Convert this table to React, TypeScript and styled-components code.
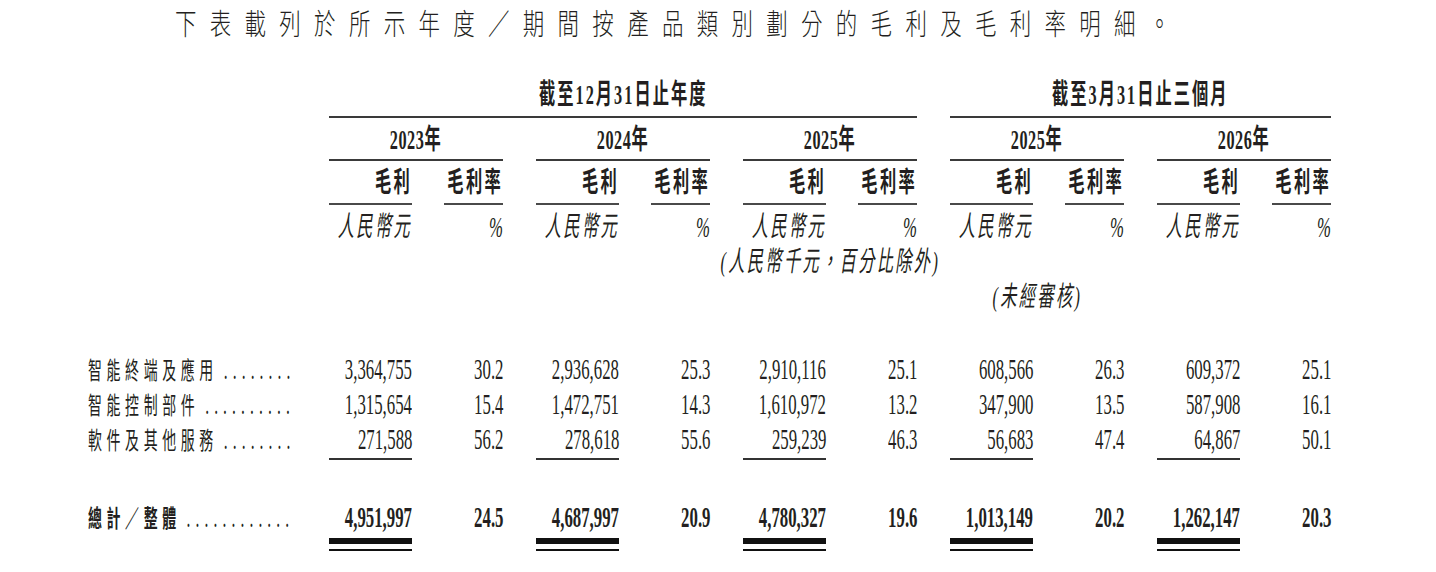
import React from 'react';
import styled, { createGlobalStyle } from 'styled-components';

// the source is set in condensed faces, so every text run is squeezed horizontally
const SQUEEZE = 0.58;
const NUM_SQUEEZE = 0.56;
const GROUP_W = 174;
const GROUP_GAP = 33;
const AMOUNT_W = 83;
const PCT_W = 59;

type Align = 'left' | 'center' | 'right';
const justify: Record<Align, string> = {
  left: 'flex-start',
  center: 'center',
  right: 'flex-end',
};

const GlobalStyle = createGlobalStyle`
  html, body {
    margin: 0;
    background: #fff;
    overflow: hidden;
  }
  body {
    font-family: 'Liberation Serif', 'Noto Sans CJK TC', serif;
    color: #231f20;
  }
`;

const Intro = styled.div`
  display: flex;
  height: 44px;
  padding-left: 175px;
  line-height: 44px;
`;

const IntroText = styled.span`
  display: inline-block;
  white-space: nowrap;
  transform: scaleX(0.74);
  transform-origin: left center;
  font-family: 'Noto Sans CJK TC', sans-serif;
  font-weight: 300;
  font-size: 29px;
  letter-spacing: 18px;
  color: #231f20;
`;

const Table = styled.div`
  display: flex;
  flex-direction: column;
  padding-left: 88px;
  font-size: 28px;
`;

const Row = styled.div<{ $top?: number; $lh?: number }>`
  display: flex;
  margin-top: ${(p) => p.$top ?? 0}px;
  line-height: ${(p) => p.$lh ?? 30}px;
`;

const Label = styled.div<{ $h?: number }>`
  width: 208px;
  height: ${(p) => (p.$h ? `${p.$h}px` : 'auto')};
  flex-shrink: 0;
  display: flex;
`;

const Group = styled.div<{ $span?: number; $rule?: boolean; $align?: Align; $padTop?: number; $padBottom?: number }>`
  width: ${(p) => GROUP_W * (p.$span ?? 1) + GROUP_GAP * ((p.$span ?? 1) - 1)}px;
  margin-left: ${GROUP_GAP}px;
  flex-shrink: 0;
  display: flex;
  justify-content: ${(p) => (p.$align ? justify[p.$align] : 'space-between')};
  padding-top: ${(p) => p.$padTop ?? 0}px;
  padding-bottom: ${(p) => p.$padBottom ?? 0}px;
  border-bottom: ${(p) => (p.$rule ? '2px solid #3a3a3a' : 'none')};
`;

const Cell = styled.div<{ $w: number; $align?: Align; $rule?: boolean; $padTop?: number; $padBottom?: number }>`
  width: ${(p) => p.$w}px;
  display: flex;
  justify-content: ${(p) => justify[p.$align ?? 'right']};
  padding-top: ${(p) => p.$padTop ?? 0}px;
  padding-bottom: ${(p) => p.$padBottom ?? 0}px;
  border-bottom: ${(p) => (p.$rule ? '2px solid #4a4a4a' : 'none')};
`;

const Fit = styled.span<{ $origin?: Align; $bold?: boolean; $italic?: boolean; $spacing?: number }>`
  display: inline-block;
  vertical-align: top;
  white-space: nowrap;
  transform: scaleX(${SQUEEZE});
  transform-origin: ${(p) => p.$origin ?? 'right'} center;
  font-weight: ${(p) => (p.$bold ? 700 : 400)};
  font-style: ${(p) => (p.$italic ? 'italic' : 'normal')};
  letter-spacing: ${(p) => p.$spacing ?? 0}px;
`;

const Num = styled(Fit)`
  font-size: 30px;
  transform: scaleX(${NUM_SQUEEZE});
`;

// label and its leader dots share one face so the line box stays one row high
const LabelText = styled(Fit)`
  font-family: 'Noto Sans CJK TC', sans-serif;
  font-size: 24px;
  font-weight: ${(p) => (p.$bold ? 700 : 400)};
  letter-spacing: 8px;
  color: #231f20;
`;

const Dots = styled.span`
  margin-left: 10px;
  letter-spacing: 8.8px;
  font-weight: 400;
`;

const SubtotalRule = styled.div`
  width: ${AMOUNT_W}px;
  height: 2px;
  background: #333;
`;

const DoubleRule = styled.div`
  width: ${AMOUNT_W}px;
  height: 5px;
  border-top: 6px solid #111;
  border-bottom: 2px solid #111;
`;

const years = ['2023年', '2024年', '2025年', '2025年', '2026年'];

type Line = { label: string; dots: number; values: [string, string][] };

const lines: Line[] = [
  {
    label: '智能終端及應用',
    dots: 8,
    values: [['3,364,755', '30.2'], ['2,936,628', '25.3'], ['2,910,116', '25.1'], ['608,566', '26.3'], ['609,372', '25.1']],
  },
  {
    label: '智能控制部件',
    dots: 10,
    values: [['1,315,654', '15.4'], ['1,472,751', '14.3'], ['1,610,972', '13.2'], ['347,900', '13.5'], ['587,908', '16.1']],
  },
  {
    label: '軟件及其他服務',
    dots: 8,
    values: [['271,588', '56.2'], ['278,618', '55.6'], ['259,239', '46.3'], ['56,683', '47.4'], ['64,867', '50.1']],
  },
];

const total: Line = {
  label: '總計／整體',
  dots: 12,
  values: [['4,951,997', '24.5'], ['4,687,997', '20.9'], ['4,780,327', '19.6'], ['1,013,149', '20.2'], ['1,262,147', '20.3']],
};

const ROW_H = 35;

const DataRow: React.FC<{ line: Line; top: number; bold?: boolean }> = ({ line, top, bold }) => (
  <Row $top={top} $lh={ROW_H}>
    <Label $h={ROW_H}>
      <LabelText $origin="left" $bold={bold}>
        {line.label}
        <Dots>{'.'.repeat(line.dots)}</Dots>
      </LabelText>
    </Label>
    {line.values.map(([amount, pct], i) => (
      <Group key={i}>
        <Cell $w={AMOUNT_W}>
          <Num $bold={bold}>{amount}</Num>
        </Cell>
        <Cell $w={PCT_W}>
          <Num $bold={bold}>{pct}</Num>
        </Cell>
      </Group>
    ))}
  </Row>
);

const App: React.FC = () => {
  return (
    <>
      <GlobalStyle />
      <Intro>
        <IntroText>下表載列於所示年度／期間按產品類別劃分的毛利及毛利率明細。</IntroText>
      </Intro>
      <Table>
        <Row $top={36}>
          <Label />
          <Group $span={3} $align="center" $rule $padBottom={6}>
            <Fit $origin="center" $bold $spacing={3.5}>截至12月31日止年度</Fit>
          </Group>
          <Group $span={2} $align="center" $rule $padBottom={6}>
            <Fit $origin="center" $bold $spacing={3.5}>截至3月31日止三個月</Fit>
          </Group>
        </Row>

        <Row>
          <Label />
          {years.map((year, i) => (
            <Group key={i} $align="center" $rule $padTop={7} $padBottom={4}>
              <Fit $origin="center" $bold $spacing={1}>{year}</Fit>
            </Group>
          ))}
        </Row>

        <Row>
          <Label />
          {years.map((_, i) => (
            <Group key={i}>
              <Cell $w={AMOUNT_W} $rule $padTop={7} $padBottom={5}>
                <Fit $bold $spacing={4}>毛利</Fit>
              </Cell>
              <Cell $w={PCT_W} $rule $padTop={7} $padBottom={5}>
                <Fit $bold $spacing={4}>毛利率</Fit>
              </Cell>
            </Group>
          ))}
        </Row>

        <Row $top={7}>
          <Label />
          {years.map((_, i) => (
            <Group key={i}>
              <Cell $w={AMOUNT_W}>
                <Fit $italic $spacing={4}>人民幣元</Fit>
              </Cell>
              <Cell $w={PCT_W}>
                <Num $italic>%</Num>
              </Cell>
            </Group>
          ))}
        </Row>

        <Row $top={5}>
          <Label />
          {years.map((_, i) => (
            <Group key={i} $align="center">
              {i === 2 && (
                <Fit $origin="center" $italic $spacing={4}>(人民幣千元，百分比除外)</Fit>
              )}
            </Group>
          ))}
        </Row>

        <Row $top={5}>
          <Label />
          {years.map((_, i) => (
            <Group key={i} $align="center">
              {i === 3 && (
                <Fit $origin="center" $italic $spacing={4}>(未經審核)</Fit>
              )}
            </Group>
          ))}
        </Row>

        {lines.map((line, i) => (
          <DataRow key={line.label} line={line} top={i === 0 ? 39 : 0} />
        ))}

        <Row $top={2} $lh={2}>
          <Label />
          {years.map((_, i) => (
            <Group key={i}>
              <SubtotalRule />
            </Group>
          ))}
        </Row>

        <DataRow line={total} top={39} bold />

        <Row $top={4} $lh={5}>
          <Label />
          {years.map((_, i) => (
            <Group key={i}>
              <DoubleRule />
            </Group>
          ))}
        </Row>
      </Table>
    </>
  );
};

export default App;
